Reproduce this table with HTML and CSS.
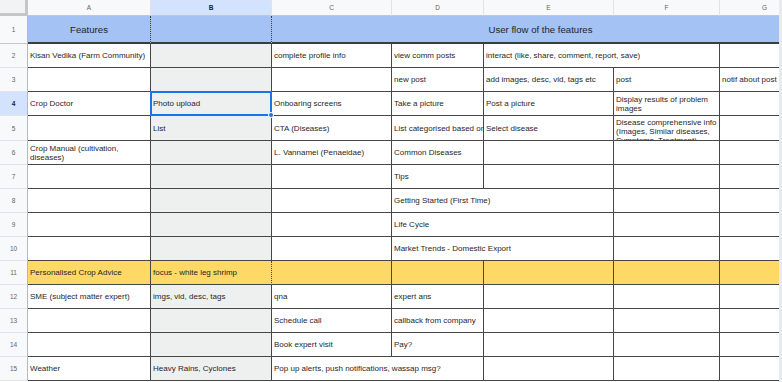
FILE: index.html
```html
<!DOCTYPE html>
<html lang="en">
<head>
    <meta charset="UTF-8">
    <title>Features - User flow</title>
    <link rel="stylesheet" href="styles.css">
</head>
<body>
    <div class="grid-wrap">
        <table class="sheet">
            <colgroup>
                <col class="w-rh"><col class="w-a"><col class="w-b"><col class="w-c">
                <col class="w-d"><col class="w-e"><col class="w-f"><col class="w-g">
            </colgroup>
            <thead>
                <tr class="col-head">
                    <th class="corner"></th>
                    <th>A</th>
                    <th class="sel">B</th>
                    <th>C</th>
                    <th>D</th>
                    <th>E</th>
                    <th>F</th>
                    <th>G</th>
                </tr>
            </thead>
            <tbody>
                <tr class="r-title">
                    <td class="rh">1</td>
                    <td class="title dotted">Features</td>
                    <td class="title dotted"></td>
                    <td class="title" colspan="5">User flow of the features</td>
                </tr>
                <tr>
                    <td class="rh">2</td>
                    <td>Kisan Vedika (Farm Community)</td>
                    <td class="gray"></td>
                    <td>complete profile info</td>
                    <td>view comm posts</td>
                    <td colspan="2">interact (like, share, comment, report, save)</td>
                    <td></td>
                </tr>
                <tr>
                    <td class="rh">3</td>
                    <td></td>
                    <td class="gray"></td>
                    <td></td>
                    <td>new post</td>
                    <td>add images, desc, vid, tags etc</td>
                    <td>post</td>
                    <td>notif about post approval</td>
                </tr>
                <tr>
                    <td class="rh active">4</td>
                    <td>Crop Doctor</td>
                    <td class="gray selected">Photo upload<span class="handle"></span></td>
                    <td>Onboaring screens</td>
                    <td>Take a picture</td>
                    <td>Post a picture</td>
                    <td class="wrap"><div class="clip">Display results of problem images</div></td>
                    <td></td>
                </tr>
                <tr>
                    <td class="rh">5</td>
                    <td></td>
                    <td class="gray">List</td>
                    <td>CTA (Diseases)</td>
                    <td>List categorised based on disease type</td>
                    <td>Select disease</td>
                    <td class="wrap top"><div class="clip">Disease comprehensive info (Images, Similar diseases, Symptoms, Treatment)</div></td>
                    <td></td>
                </tr>
                <tr>
                    <td class="rh">6</td>
                    <td class="wrap"><div class="clip">Crop Manual (cultivation, diseases)</div></td>
                    <td class="gray"></td>
                    <td>L. Vannamei (Penaeidae)</td>
                    <td>Common Diseases</td>
                    <td></td>
                    <td></td>
                    <td></td>
                </tr>
                <tr>
                    <td class="rh">7</td>
                    <td></td>
                    <td class="gray"></td>
                    <td></td>
                    <td>Tips</td>
                    <td></td>
                    <td></td>
                    <td></td>
                </tr>
                <tr>
                    <td class="rh">8</td>
                    <td></td>
                    <td class="gray"></td>
                    <td></td>
                    <td colspan="2">Getting Started (First Time)</td>
                    <td></td>
                    <td></td>
                </tr>
                <tr>
                    <td class="rh">9</td>
                    <td></td>
                    <td class="gray"></td>
                    <td></td>
                    <td colspan="2">Life Cycle</td>
                    <td></td>
                    <td></td>
                </tr>
                <tr>
                    <td class="rh">10</td>
                    <td></td>
                    <td class="gray"></td>
                    <td></td>
                    <td colspan="2">Market Trends - Domestic Export</td>
                    <td></td>
                    <td></td>
                </tr>
                <tr class="r-yellow">
                    <td class="rh">11</td>
                    <td>Personalised Crop Advice</td>
                    <td class="dotted">focus - white leg shrimp</td>
                    <td></td>
                    <td></td>
                    <td></td>
                    <td></td>
                    <td></td>
                </tr>
                <tr>
                    <td class="rh">12</td>
                    <td>SME (subject matter expert)</td>
                    <td class="gray">imgs, vid, desc, tags</td>
                    <td>qna</td>
                    <td>expert ans</td>
                    <td></td>
                    <td></td>
                    <td></td>
                </tr>
                <tr>
                    <td class="rh">13</td>
                    <td></td>
                    <td class="gray"></td>
                    <td>Schedule call</td>
                    <td>callback from company</td>
                    <td></td>
                    <td></td>
                    <td></td>
                </tr>
                <tr>
                    <td class="rh">14</td>
                    <td></td>
                    <td class="gray"></td>
                    <td>Book expert visit</td>
                    <td>Pay?</td>
                    <td></td>
                    <td></td>
                    <td></td>
                </tr>
                <tr>
                    <td class="rh">15</td>
                    <td>Weather</td>
                    <td class="gray">Heavy Rains, Cyclones</td>
                    <td colspan="2">Pop up alerts, push notifications, wassap msg?</td>
                    <td></td>
                    <td></td>
                    <td></td>
                </tr>
            </tbody>
        </table>
        <div class="scroll-edge"></div>
    </div>
</body>
</html>
```

FILE: styles.css
```css
* {
    margin: 0;
    padding: 0;
    box-sizing: border-box;
}
html, body {
    width: 782px;
    height: 382px;
    overflow: hidden;
    background: #ffffff;
}
body {
    font-family: 'Liberation Sans', Arial, sans-serif;
    font-size: 8px;
    color: #1f1f1f;
}
.grid-wrap {
    position: relative;
    width: 782px;
    height: 382px;
    overflow: hidden;
}
.sheet {
    table-layout: fixed;
    border-collapse: separate;
    border-spacing: 0;
    width: 809px;
}
.w-rh { width: 28px; }
.w-a { width: 123px; }
.w-b { width: 121px; }
.w-c { width: 120px; }
.w-d { width: 92px; }
.w-e { width: 130px; }
.w-f { width: 106px; }
.w-g { width: 90px; }

/* column letters */
.col-head th {
    height: 16px;
    background: #f8f9fa;
    color: #5f6368;
    font-size: 6.5px;
    font-weight: normal;
    text-align: center;
    vertical-align: middle;
    border-right: 1px solid #e1e3e6;
    border-bottom: 1px solid #c4c7c5;
}
.col-head th.sel {
    background: #d3e3fd;
    color: #0b1f44;
    font-weight: bold;
}
.col-head th.corner {
    background: #f1f3f4;
    border-right: 3px solid #c4c7c5;
    border-bottom: 3px solid #c4c7c5;
}

/* cells */
td {
    height: 24px;
    padding: 0 2px;
    border-right: 1px solid #464646;
    border-bottom: 1px solid #464646;
    white-space: nowrap;
    overflow: hidden;
    vertical-align: middle;
    position: relative;
}
td.rh {
    padding: 0;
    background: #f8f9fa;
    color: #5f6368;
    font-size: 6.5px;
    text-align: center;
    border-right: 1px solid #b6b9bc;
    border-bottom: 1px solid #e1e3e6;
}
td.rh.active {
    background: #d3e3fd;
    color: #0b1f44;
    font-weight: bold;
}
.gray {
    background-color: #eeefef;
    background-image: radial-gradient(#e7e8e8 0.5px, transparent 0.7px);
    background-size: 4px 4px;
}
.r-title td {
    height: 28px;
    border-bottom: 2px solid #3c3c3c;
}
.r-title td.title {
    background: #a4c2f4;
    font-size: 9.6px;
    text-align: center;
}
.r-title td.dotted {
    border-right: 1px dotted #3c3c3c;
}
.r-title td.rh {
    border-bottom: 1px solid #c4c7c5;
}
.r-yellow td {
    background: #ffd966;
}
.r-yellow td.rh {
    background: #f8f9fa;
}
.r-yellow td.dotted {
    border-right: 1px dotted #464646;
}

/* wrapped cells */
td.wrap {
    white-space: normal;
}
td.wrap .clip {
    max-height: 22px;
    overflow: hidden;
    line-height: 9px;
}
td.top {
    vertical-align: top;
    padding-top: 2px;
}

/* selected cell */
td.selected::after {
    content: "";
    position: absolute;
    left: -1px;
    top: -1px;
    right: -1px;
    bottom: -1px;
    border: 2px solid #1a73e8;
}
.handle {
    position: absolute;
    right: -3px;
    bottom: -3px;
    width: 6px;
    height: 6px;
    border-radius: 50%;
    background: #1a73e8;
    border: 1px solid #ffffff;
    z-index: 2;
}
td.selected {
    overflow: visible;
}

.scroll-edge {
    position: absolute;
    top: 0;
    right: 0;
    width: 3px;
    height: 382px;
    background: #e8eaed;
}
```
